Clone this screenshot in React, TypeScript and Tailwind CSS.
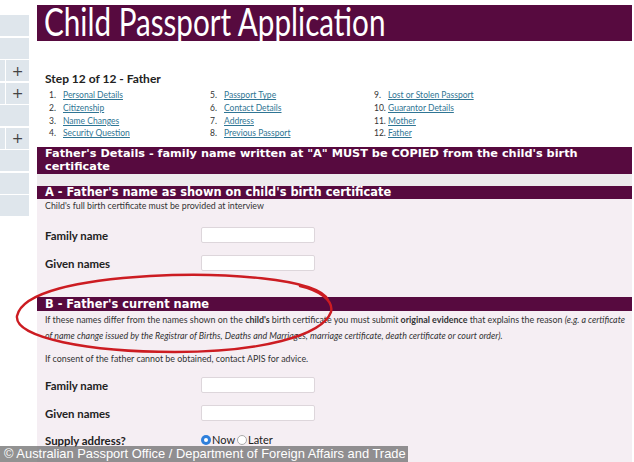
import React from "react";

const steps: [string, string][] = [
  ["1.", "Personal Details"],
  ["2.", "Citizenship"],
  ["3.", "Name Changes"],
  ["4.", "Security Question"],
  ["5.", "Passport Type"],
  ["6.", "Contact Details"],
  ["7.", "Address"],
  ["8.", "Previous Passport"],
  ["9.", "Lost or Stolen Passport"],
  ["10.", "Guarantor Details"],
  ["11.", "Mother"],
  ["12.", "Father"],
];

// which sidebar rows carry a "+" toggle
const sideRows = [false, false, true, true, false, true, false, false, false];

const Bar = ({ children, className = "" }: { children: React.ReactNode; className?: string }) => (
  <div
    className={
      "bg-[#570a3f] text-white font-['DejaVu_Sans',sans-serif] font-bold pl-[8px] whitespace-nowrap " + className
    }
  >
    {children}
  </div>
);

const Field = ({ label, className = "" }: { label: string; className?: string }) => (
  <div className={"flex items-center h-[16px] pl-[8px] " + className}>
    <span className="w-[156px] font-bold text-[11.4px]">{label}</span>
    <div className="w-[114px] h-[16px] bg-white border border-[#ddd6db] rounded-[2px]" />
  </div>
);

export default function App() {
  return (
    <div className="relative w-[634px] h-[462px] overflow-hidden bg-white flex font-['Lato',sans-serif] text-[#222]">
      {/* left nav column */}
      <aside className="w-[29px] shrink-0 pt-[15px] flex flex-col gap-[1.5px]">
        {sideRows.map((plus, i) =>
          plus ? (
            <div key={i} className="h-[21px] flex gap-[1px]">
              <div className="w-[5px] bg-[#dfe6ec]" />
              <div className="flex-1 bg-[#dfe6ec] flex items-center justify-center text-[#444] text-[14px] leading-none font-['DejaVu_Sans',sans-serif]">
                +
              </div>
            </div>
          ) : (
            <div key={i} className="h-[21px] bg-[#dfe6ec]" />
          )
        )}
      </aside>

      <main className="ml-[8px] w-[595px] flex flex-col">
        <div className="mt-[5px] h-[36px] bg-[#570a3f] pl-[7px]">
          <span className="inline-block origin-left scale-x-[0.78] text-white text-[38px] leading-[33px] whitespace-nowrap">
            Child Passport Application
          </span>
        </div>

        <h3 className="mt-[31px] pl-[8px] font-bold text-[12px] leading-[14px]">Step 12 of 12 - Father</h3>

        <ol className="mt-[3px] pl-[12px] grid grid-rows-4 grid-flow-col grid-cols-[161px_164px_1fr] text-[8.5px] leading-[12.8px]">
          {steps.map(([n, t]) => (
            <li key={n} className="flex">
              <span className="w-[14px] text-[#333]">{n}</span>
              <a href="#" className="text-[#2f7594] underline">
                {t}
              </a>
            </li>
          ))}
        </ol>

        <section className="mt-[7px] flex-1 bg-[#f5eef3]">
          <Bar className="h-[27px] pt-[1px] text-[11.3px] leading-[12.5px]">
            Father's Details - family name written at "A" MUST be COPIED from the child's birth
            <br />
            certificate
          </Bar>
          <div className="h-[12px] bg-[#eeeaed]" />
          <Bar className="h-[13px] text-[11.4px] leading-[13px]">
            A - Father's name as shown on child's birth certificate
          </Bar>
          <p className="pl-[8px] text-[8.8px] leading-[13px] text-[#333]">
            Child's full birth certificate must be provided at interview
          </p>

          <Field label="Family name" className="mt-[15px]" />
          <Field label="Given names" className="mt-[12px]" />

          <Bar className="mt-[26px] h-[14px] text-[11.4px] leading-[14px]">B - Father's current name</Bar>
          <p className="mt-[1px] pl-[8px] text-[8.9px] leading-[16px] text-[#333] whitespace-nowrap">
            If these names differ from the names shown on the <b>child's</b> birth certificate you must submit{" "}
            <b>original evidence</b> that explains the reason <i>(e.g. a certificate</i>
            <br />
            <i>
              of name change issued by the Registrar of Births, Deaths and Marriages, marriage certificate, death
              certificate or court order).
            </i>
          </p>
          <p className="mt-[7px] pl-[8px] text-[8.9px] leading-[16px] text-[#333]">
            If consent of the father cannot be obtained, contact APIS for advice.
          </p>

          <Field label="Family name" className="mt-[10px]" />
          <Field label="Given names" className="mt-[12px]" />

          <div className="mt-[11px] flex items-center h-[16px] pl-[8px]">
            <span className="w-[156px] font-bold text-[11.4px]">Supply address?</span>
            <span className="w-[10px] h-[10px] rounded-full bg-[#2f80dc] flex items-center justify-center">
              <span className="w-[4px] h-[4px] rounded-full bg-white" />
            </span>
            <span className="ml-[1px] text-[11px]">Now</span>
            <span className="ml-[2px] w-[10px] h-[10px] rounded-full bg-white border border-[#aaa]" />
            <span className="ml-[1px] text-[11px]">Later</span>
          </div>
        </section>
      </main>

      {/* photo credit strip */}
      <div className="absolute left-0 bottom-0 w-[408px] h-[16px] bg-[rgba(115,115,115,0.78)] flex items-center pl-[4px]">
        <span className="text-white text-[12.9px] leading-none font-['Liberation_Sans',Arial,sans-serif] whitespace-nowrap">
          © Australian Passport Office / Department of Foreign Affairs and Trade
        </span>
      </div>

      {/* red hand-drawn highlight */}
      <svg className="absolute inset-0 pointer-events-none" width="634" height="462" viewBox="0 0 634 462">
        <path
          d="M328 300 C 318 278, 220 272, 150 276 C 80 280, 22 292, 17 316 C 14 338, 90 352, 175 352 C 260 352, 322 336, 331 312 C 334 300, 318 290, 300 286"
          fill="none"
          stroke="#cc1c22"
          strokeWidth="2.4"
          strokeLinecap="round"
        />
      </svg>
    </div>
  );
}
